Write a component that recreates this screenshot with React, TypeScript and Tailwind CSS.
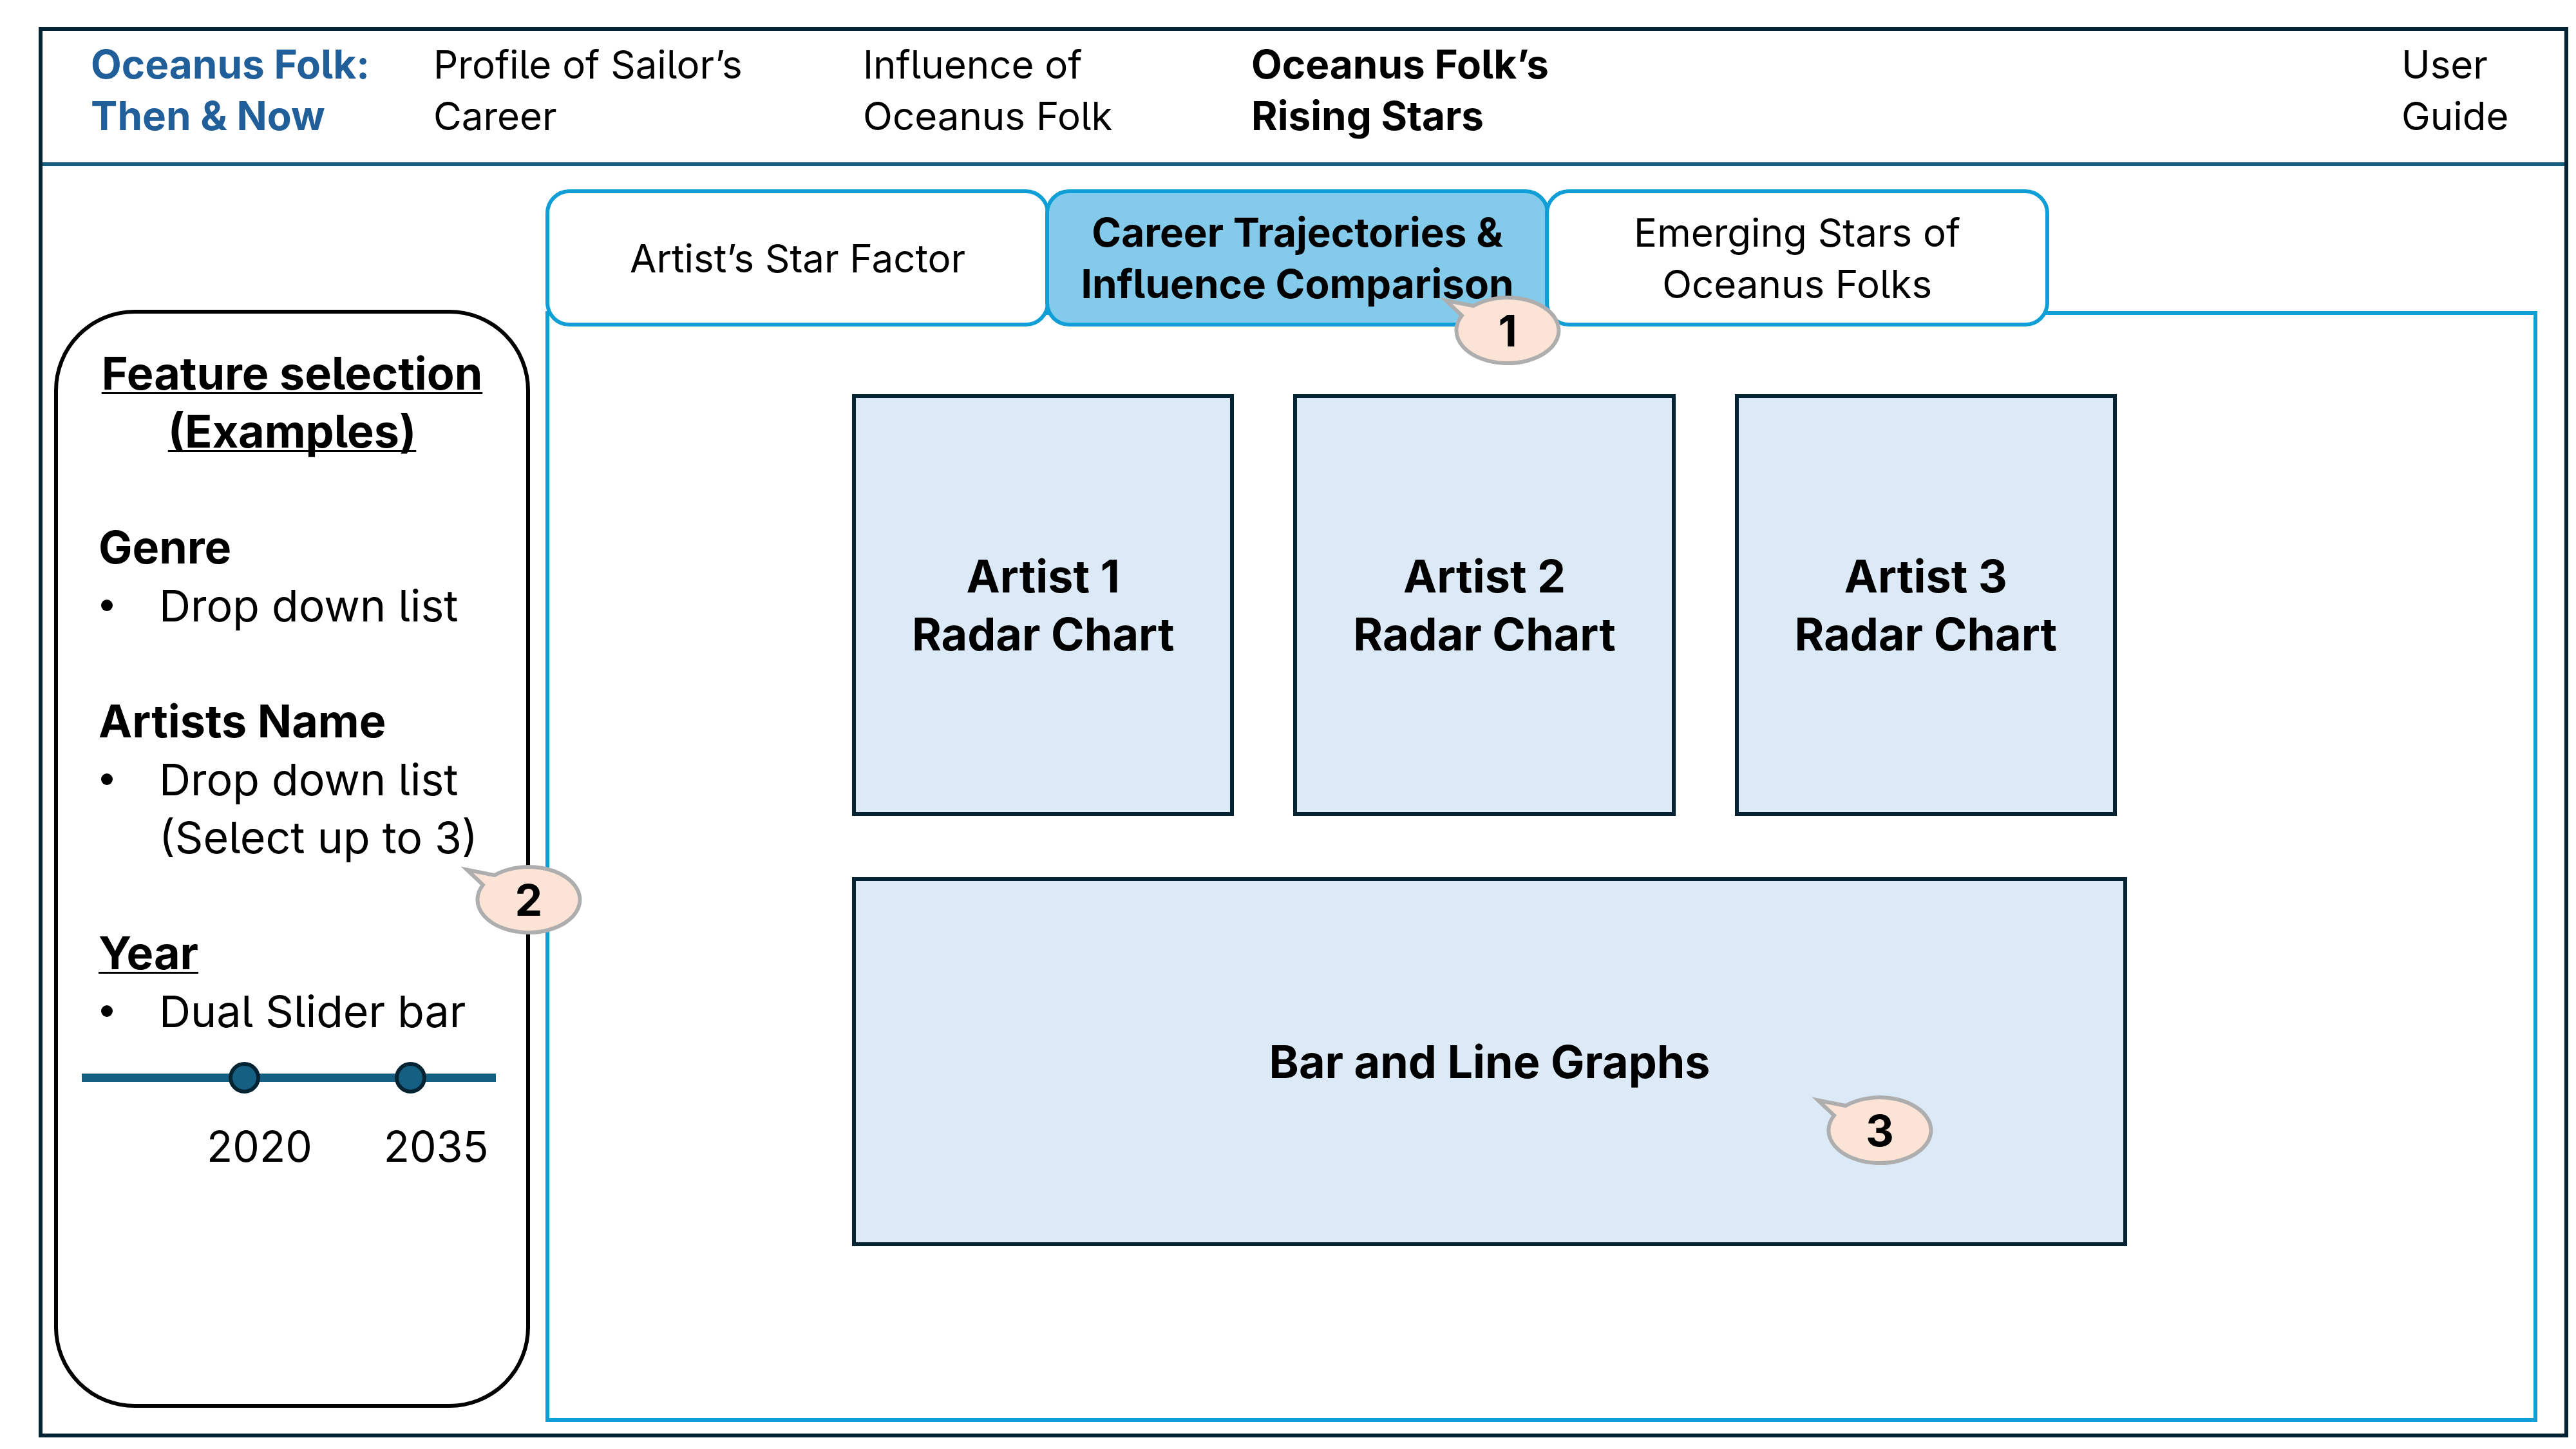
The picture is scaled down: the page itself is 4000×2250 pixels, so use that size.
import { useState } from "react";
import type { ReactNode } from "react";

const underline =
  "underline decoration-3 underline-offset-[4px] [text-decoration-skip-ink:none]";

const thumb =
  "pointer-events-none absolute inset-0 m-0 h-[49px] w-full appearance-none bg-transparent [&::-webkit-slider-thumb]:pointer-events-auto [&::-webkit-slider-thumb]:box-border [&::-webkit-slider-thumb]:size-[49px] [&::-webkit-slider-thumb]:appearance-none [&::-webkit-slider-thumb]:rounded-full [&::-webkit-slider-thumb]:border-6 [&::-webkit-slider-thumb]:border-[#042433] [&::-webkit-slider-thumb]:bg-[#156082]";

/* Oval speech bubble with its tail pointing to the upper left. */
function Callout({ label, place }: { label: string; place: string }) {
  return (
    <div className={`absolute z-20 h-[114px] w-[196px] ${place}`}>
      <svg viewBox="-110 -56 196 114" className="block size-full" aria-hidden="true">
        <path
          d="M-53 -38 A79.5 51 0 1 1 -71 -23 L-96 -46.5 Z"
          fill="#FBE3D6"
          stroke="#AEAEAE"
          strokeWidth="6"
          strokeMiterlimit="10"
        />
      </svg>
      <span className="absolute inset-y-0 right-1 left-7 text-center text-[68px] leading-[112px] font-bold">
        {label}
      </span>
    </div>
  );
}

function Tab({
  active,
  onSelect,
  children,
  callout,
}: {
  active?: boolean;
  onSelect: () => void;
  children: ReactNode;
  callout?: ReactNode;
}) {
  return (
    <div className="relative -ml-[7px] flex-1 first:ml-0">
      <button
        type="button"
        role="tab"
        aria-selected={!!active}
        onClick={onSelect}
        className={`h-[213px] w-full rounded-[37px] border-6 border-[#0F9ED5] text-center leading-[80px] ${
          active ? "bg-[#83CAEB] text-[62px] font-bold" : "bg-white text-[60px]"
        }`}
      >
        {children}
      </button>
      {callout}
    </div>
  );
}

function Bullet({ children }: { children: ReactNode }) {
  return (
    <li className="flex">
      <span className="flex h-[90px] w-[94px] shrink-0 items-center pl-1" aria-hidden="true">
        <span className="size-[18px] rounded-full bg-black" />
      </span>
      <span>{children}</span>
    </li>
  );
}

function ChartCard({ children, height }: { children: ReactNode; height: string }) {
  return (
    <section
      className={`relative flex items-center justify-center border-6 border-[#042433] bg-[#DCEAF7] text-center text-[70px] leading-[90px] font-bold ${height}`}
    >
      {children}
    </section>
  );
}

function YearSlider() {
  const [from, setFrom] = useState(2020);
  const [to, setTo] = useState(2035);
  return (
    <div className="mr-[47px] ml-[37px] pt-[34px] text-[66px]">
      <div className="relative flex h-[49px] items-center">
        <div className="h-[13px] w-full bg-[#156082]" />
        <input
          type="range"
          aria-label="From year"
          min={2006.7}
          max={2041.3}
          step="any"
          value={from}
          onChange={(e) => setFrom(Number(e.target.value))}
          className={thumb}
        />
        <input
          type="range"
          aria-label="To year"
          min={2006.7}
          max={2041.3}
          step="any"
          value={to}
          onChange={(e) => setTo(Number(e.target.value))}
          className={thumb}
        />
      </div>
      <div className="flex gap-[111px] pt-[37px] pl-[194px] leading-[90px]">
        <output>{Math.round(from)}</output>
        <output>{Math.round(to)}</output>
      </div>
    </div>
  );
}

export default function App() {
  const [tab, setTab] = useState(1);
  return (
    <div className="flex min-h-screen flex-col bg-white pt-[42px] pr-3 pb-[18px] pl-[60px] font-['Inter','Liberation_Sans',sans-serif] text-black [font-feature-settings:'cv05']">
      <div className="flex flex-1 flex-col border-6 border-[#042433]">
        <header className="border-b-6 border-[#156082]">
          <nav className="grid grid-cols-[532fr_667fr_603fr_1786fr_253fr] pt-3 pb-8 pl-[75px] text-[60px] leading-[80px] whitespace-nowrap">
            <a href="#home" className="text-[62px] font-bold text-[#215F9A]">
              Oceanus Folk:
              <br />
              Then &amp; Now
            </a>
            <a href="#profile">
              Profile of Sailor’s
              <br />
              Career
            </a>
            <a href="#influence">
              Influence of
              <br />
              Oceanus Folk
            </a>
            <a href="#stars" aria-current="page" className="text-[62px] font-bold">
              Oceanus Folk’s
              <br />
              Rising Stars
            </a>
            <a href="#guide">
              User
              <br />
              Guide
            </a>
          </nav>
        </header>

        <div className="grid flex-1 grid-cols-[739fr_3093fr] gap-6 pr-[42px] pl-[18px]">
          <aside className="relative mt-[223px] mb-10 rounded-[125px] border-6 border-black pt-12 leading-[90px]">
            <h2 className={`text-center text-[70px] font-bold ${underline}`}>
              Feature selection
              <br />
              (Examples)
            </h2>
            <div className="mt-[90px] flex flex-col gap-[90px] pl-[63px] text-[68px] whitespace-nowrap">
              <section>
                <h3 className="text-[70px] font-bold">Genre</h3>
                <ul>
                  <Bullet>Drop down list</Bullet>
                </ul>
              </section>
              <section>
                <h3 className="text-[70px] font-bold">Artists Name</h3>
                <ul>
                  <Bullet>
                    Drop down list
                    <br />
                    (Select up to 3)
                  </Bullet>
                </ul>
              </section>
              <section>
                <h3 className={`text-[70px] font-bold ${underline}`}>Year</h3>
                <ul>
                  <Bullet>Dual Slider bar</Bullet>
                </ul>
              </section>
            </div>
            <YearSlider />
            <Callout label="2" place="top-[854px] -right-[90px]" />
          </aside>

          <main className="mt-9 mb-[18px] flex flex-col">
            <div role="tablist" className="relative z-10 flex w-[75.5%]">
              <Tab active={tab === 0} onSelect={() => setTab(0)}>
                Artist’s Star Factor
              </Tab>
              <Tab
                active={tab === 1}
                onSelect={() => setTab(1)}
                callout={<Callout label="1" place="-right-[21px] -bottom-[64px]" />}
              >
                Career Trajectories &amp;
                <br />
                Influence Comparison
              </Tab>
              <Tab active={tab === 2} onSelect={() => setTab(2)}>
                Emerging Stars of
                <br />
                Oceanus Folks
              </Tab>
            </div>
            <div
              role="tabpanel"
              className="-mt-6 flex flex-1 flex-col gap-[95px] border-6 border-[#0F9ED5] pt-[123px] pr-[20.4%] pb-[95px] pl-[15.2%]"
            >
              <div className="grid grid-cols-3 gap-[92px] pr-4">
                {[1, 2, 3].map((n) => (
                  <ChartCard key={n} height="h-[655px]">
                    Artist {n}
                    <br />
                    Radar Chart
                  </ChartCard>
                ))}
              </div>
              <ChartCard height="h-[573px]">
                Bar and Line Graphs
                <Callout label="3" place="right-[292px] bottom-[116px]" />
              </ChartCard>
            </div>
          </main>
        </div>
      </div>
    </div>
  );
}
